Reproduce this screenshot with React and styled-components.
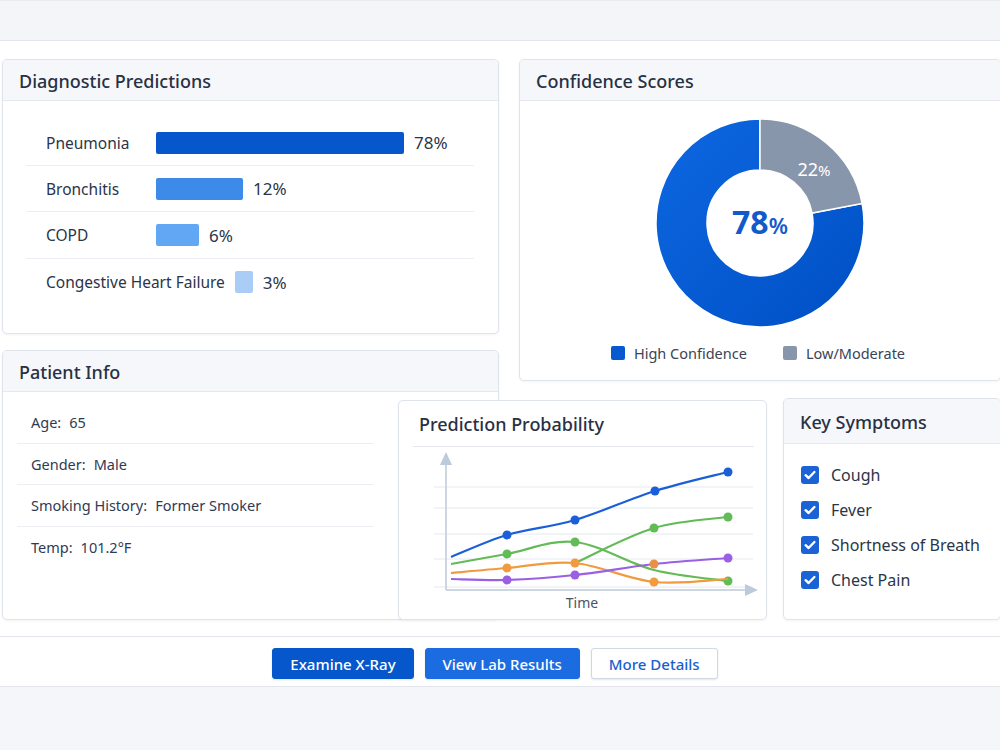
import React from "react";
import styled, { createGlobalStyle } from "styled-components";

const GlobalStyle = createGlobalStyle`
    body {
        margin: 0;
        background: #f4f6f9;
        font-family: "Noto Sans", "Open Sans", sans-serif;
        color: #2b3548;
        overflow: hidden;
    }
`;

const predictions = [
    { name: "Pneumonia", width: 248, color: "#0656cc", value: "78%" },
    { name: "Bronchitis", width: 87, color: "#3d8ae8", value: "12%" },
    { name: "COPD", width: 43, color: "#61a7f4", value: "6%" },
    { name: "Congestive Heart Failure", width: 18, color: "#a9cdf7", value: "3%" },
];

const patient = [
    ["Age:", "65"],
    ["Gender:", "Male"],
    ["Smoking History:", "Former Smoker"],
    ["Temp:", "101.2°F"],
];

const symptoms = ["Cough", "Fever", "Shortness of Breath", "Chest Pain"];

// series drawn in page coordinates (the svg viewBox starts at the card's corner)
const series = [
    {
        color: "#1b5fd8",
        points: [[450, 557], [506, 535], [574, 520], [654, 491], [727, 472]],
        dots: [1, 2, 3, 4],
    },
    {
        color: "#62bb57",
        points: [[450, 564], [506, 554], [574, 542], [653, 570], [727, 581]],
        dots: [1, 2, 4],
    },
    {
        color: "#62bb57",
        points: [[574, 563], [653, 528], [727, 517]],
        dots: [1, 2],
    },
    {
        color: "#f29a3e",
        points: [[450, 573], [506, 568], [574, 563], [653, 582], [727, 579]],
        dots: [1, 2, 3],
    },
    {
        color: "#9a5fe3",
        points: [[450, 579], [506, 580], [574, 575], [653, 564], [727, 558]],
        dots: [1, 2, 4],
    },
];

function smoothPath(pts) {
    let d = `M${pts[0][0]},${pts[0][1]}`;
    for (let i = 0; i < pts.length - 1; i++) {
        const p0 = pts[i - 1] || pts[i];
        const p1 = pts[i];
        const p2 = pts[i + 1];
        const p3 = pts[i + 2] || p2;
        const c1x = p1[0] + (p2[0] - p0[0]) / 6;
        const c1y = p1[1] + (p2[1] - p0[1]) / 6;
        const c2x = p2[0] - (p3[0] - p1[0]) / 6;
        const c2y = p2[1] - (p3[1] - p1[1]) / 6;
        d += ` C${c1x},${c1y} ${c2x},${c2y} ${p2[0]},${p2[1]}`;
    }
    return d;
}

function ringSlice(cx, cy, R, r, a0, a1) {
    const pt = (rad, a) => {
        const t = (a * Math.PI) / 180;
        return [cx + rad * Math.sin(t), cy - rad * Math.cos(t)];
    };
    const large = a1 - a0 > 180 ? 1 : 0;
    const [x0, y0] = pt(R, a0);
    const [x1, y1] = pt(R, a1);
    const [x2, y2] = pt(r, a1);
    const [x3, y3] = pt(r, a0);
    return `M${x0},${y0} A${R},${R} 0 ${large} 1 ${x1},${y1} L${x2},${y2} A${r},${r} 0 ${large} 0 ${x3},${y3} Z`;
}

function Donut() {
    const c = 106;
    return (
        <svg width="212" height="212" viewBox="0 0 212 212">
            <defs>
                <linearGradient id="blueRing" x1="0" y1="0" x2="1" y2="1">
                    <stop offset="0" stopColor="#0d68e2" />
                    <stop offset="1" stopColor="#004fc4" />
                </linearGradient>
            </defs>
            <path d={ringSlice(c, c, 104, 53, 79.2, 360)} fill="url(#blueRing)" stroke="#fff" strokeWidth="1.5" />
            <path d={ringSlice(c, c, 104, 53, 0, 79.2)} fill="#8896ab" stroke="#fff" strokeWidth="1.5" />
            <text x="160" y="59" fill="#fff" fontSize="18" fontFamily="Noto Sans, sans-serif" textAnchor="middle">
                22<tspan fontSize="15">%</tspan>
            </text>
            <text x="106" y="117" fill="#1259cc" fontSize="32" fontWeight="700" fontFamily="Noto Sans, sans-serif" textAnchor="middle">
                78<tspan fontSize="22" fontWeight="600">%</tspan>
            </text>
        </svg>
    );
}

function CheckIcon() {
    return (
        <svg width="18" height="18" viewBox="0 0 18 18">
            <rect width="18" height="18" rx="3" fill="#1a62d6" />
            <path d="M4.6 9.2 L7.6 12 L13.4 6" fill="none" stroke="#fff" strokeWidth="2.4" strokeLinecap="round" strokeLinejoin="round" />
        </svg>
    );
}

function ProbabilityChart() {
    const grid = [487, 508, 534, 559, 587];
    return (
        <svg width="369" height="168" viewBox="398 447 369 168">
            {grid.map((y) => (
                <line key={y} x1="433" x2="752" y1={y} y2={y} stroke="#e4e9f0" strokeWidth="1" />
            ))}
            <line x1="445" x2="445" y1="462" y2="590" stroke="#bccadb" strokeWidth="1.5" />
            <polygon points="445,452 439,465 451,465" fill="#bccadb" />
            <line x1="445" x2="746" y1="590" y2="590" stroke="#bccadb" strokeWidth="1.5" />
            <polygon points="757,590 744,584 744,596" fill="#bccadb" />
            {series.map((s, i) => (
                <g key={i}>
                    <path d={smoothPath(s.points)} fill="none" stroke={s.color} strokeWidth="2.2" />
                    {s.dots.map((k) => (
                        <circle key={k} cx={s.points[k][0]} cy={s.points[k][1]} r="4.5" fill={s.color} />
                    ))}
                </g>
            ))}
            <circle cx="653" cy="564" r="4.5" fill="#e8904a" />
            <text x="581" y="608" fontSize="14" fill="#4a5568" fontFamily="Noto Sans, sans-serif" textAnchor="middle">
                Time
            </text>
        </svg>
    );
}

export default function App() {
    return (
        <>
            <GlobalStyle />
            <TopBar />
            <Main>
                <Board>
                    <Card $col="1 / 3" $row="1 / 2">
                        <CardHeader>Diagnostic Predictions</CardHeader>
                        <PredictionList>
                            {predictions.map((p) => (
                                <PredictionRow key={p.name}>
                                    <PredictionName>{p.name}</PredictionName>
                                    <Bar style={{ width: p.width }} $color={p.color} />
                                    <Percent>{p.value}</Percent>
                                </PredictionRow>
                            ))}
                        </PredictionList>
                    </Card>

                    <Card $col="4 / 7" $row="1 / 4">
                        <CardHeader>Confidence Scores</CardHeader>
                        <DonutBody>
                            <Donut />
                            <Legend>
                                <LegendItem>
                                    <Swatch $color="#0759d0" />
                                    High Confidence
                                </LegendItem>
                                <LegendItem>
                                    <Swatch $color="#8896ab" />
                                    Low/Moderate
                                </LegendItem>
                            </Legend>
                        </DonutBody>
                    </Card>

                    <Card $col="1 / 3" $row="3 / 7">
                        <CardHeader $height={41}>Patient Info</CardHeader>
                        <InfoList>
                            {patient.map(([label, value]) => (
                                <InfoRow key={label}>
                                    {label}
                                    <InfoValue>{value}</InfoValue>
                                </InfoRow>
                            ))}
                        </InfoList>
                    </Card>

                    <Card $col="2 / 5" $row="6 / 7">
                        <PlainTitle>Prediction Probability</PlainTitle>
                        <ProbabilityChart />
                    </Card>

                    <Card $col="6 / 7" $row="5 / 7">
                        <CardHeader $height={45}>Key Symptoms</CardHeader>
                        <SymptomList>
                            {symptoms.map((s) => (
                                <Symptom key={s}>
                                    <CheckIcon />
                                    {s}
                                </Symptom>
                            ))}
                        </SymptomList>
                    </Card>
                </Board>
            </Main>
            <ActionBar>
                <Button $variant="primary">Examine X-Ray</Button>
                <Button $variant="secondary">View Lab Results</Button>
                <Button $variant="outline">More Details</Button>
            </ActionBar>
        </>
    );
}

const TopBar = styled.div`
    background: #f3f5f8;
    border-top: 1px solid #e8ebf0;
    border-bottom: 1px solid #e2e6ec;
    box-sizing: border-box;
    height: 41px;
`;

const Main = styled.main`
    background: #fff;
    padding: 18px 0 16px 2px;
`;

const Board = styled.div`
    display: grid;
    grid-template-columns: 396px 101px 20px 248px 16px 218px;
    grid-template-rows: 275px 16px 31px 17px 2px 220px;
    width: 999px;
`;

const Card = styled.section`
    grid-column: ${(p) => p.$col};
    grid-row: ${(p) => p.$row};
    background: #fff;
    border: 1px solid #dfe3ea;
    border-radius: 5px;
    box-shadow: 0 1px 3px rgba(30, 45, 70, 0.05);
    overflow: hidden;
    display: flex;
    flex-direction: column;
`;

const CardHeader = styled.h2`
    margin: 0;
    height: ${(p) => p.$height || 41}px;
    flex-shrink: 0;
    box-sizing: border-box;
    display: flex;
    align-items: center;
    padding: 1px 16px 0;
    background: #f6f7fa;
    border-bottom: 1px solid #e5e8ee;
    font-size: 18px;
    font-weight: 500;
    color: #283144;
`;

const PlainTitle = styled.h2`
    margin: 0 12px 0 14px;
    height: 46px;
    box-sizing: border-box;
    display: flex;
    align-items: center;
    padding: 0 6px 0;
    border-bottom: 1px solid #e5e8ee;
    font-size: 18px;
    font-weight: 500;
    color: #283144;
`;

const PredictionList = styled.div`
    padding: 19px 24px 0 23px;
`;

const PredictionRow = styled.div`
    height: 46px;
    display: flex;
    align-items: center;
    gap: 10px;
    padding-left: 20px;
    border-bottom: 1px solid #eceef3;
    box-sizing: border-box;

    &:nth-child(3) {
        height: 47px;
    }

    &:last-child {
        border-bottom: none;
    }
`;

const PredictionName = styled.span`
    min-width: 100px;
    font-size: 15.5px;
    color: #2b3548;
`;

const Bar = styled.span`
    height: 22px;
    border-radius: 2px;
    background: ${(p) => p.$color};
`;

const Percent = styled.span`
    font-size: 17px;
    color: #2b3548;
`;

const DonutBody = styled.div`
    display: flex;
    flex-direction: column;
    align-items: center;
    padding-top: 16px;
`;

const Legend = styled.div`
    display: flex;
    gap: 36px;
    margin-top: 14px;
    margin-right: 4px;
`;

const LegendItem = styled.span`
    display: flex;
    align-items: center;
    gap: 9px;
    font-size: 14.5px;
    color: #3a4456;
`;

const Swatch = styled.span`
    width: 14px;
    height: 14px;
    border-radius: 2px;
    background: ${(p) => p.$color};
`;

const InfoList = styled.div`
    padding: 10px 0 0 14px;
    width: 357px;
`;

const InfoRow = styled.div`
    height: 41.5px;
    display: flex;
    align-items: center;
    padding-left: 14px;
    border-bottom: 1px solid #eceef3;
    box-sizing: border-box;
    font-size: 14.5px;
    color: #2f3b55;

    &:last-child {
        border-bottom: none;
    }
`;

const InfoValue = styled.span`
    margin-left: 8px;
`;

const SymptomList = styled.ul`
    list-style: none;
    margin: 0;
    padding: 13px 0 0 17px;
`;

const Symptom = styled.li`
    height: 35px;
    display: flex;
    align-items: center;
    gap: 12px;
    font-size: 16px;
    color: #2b3548;
`;

const ActionBar = styled.footer`
    height: 51px;
    box-sizing: border-box;
    background: #fff;
    border-top: 1px solid #e3e7ed;
    border-bottom: 1px solid #e3e7ed;
    display: flex;
    justify-content: center;
    align-items: flex-start;
    gap: 11px;
    padding-top: 11px;
    padding-right: 10px;
`;

const buttonColors = {
    primary: { bg: "#0657cc", fg: "#fff", border: "#0657cc" },
    secondary: { bg: "#1a6ce0", fg: "#fff", border: "#1a6ce0" },
    outline: { bg: "#fff", fg: "#1a5fd0", border: "#cfd8e3" },
};

const Button = styled.button`
    height: 31px;
    padding: 0 17px;
    border-radius: 3px;
    border: 1px solid ${(p) => buttonColors[p.$variant].border};
    background: ${(p) => buttonColors[p.$variant].bg};
    color: ${(p) => buttonColors[p.$variant].fg};
    font-family: "Noto Sans", sans-serif;
    font-size: 15px;
    font-weight: 500;
    cursor: pointer;
    box-shadow: 0 1px 2px rgba(20, 40, 80, 0.12);
`;
